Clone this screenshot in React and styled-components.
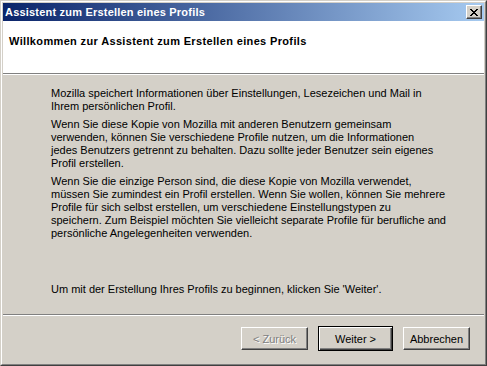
import React from "react";
import styled, { createGlobalStyle } from "styled-components";

const Global = createGlobalStyle`
  html, body { margin: 0; padding: 0; background: #d4d0c8; }
  body { width: 487px; height: 366px; overflow: hidden; font-family: "Liberation Sans", Arial, sans-serif; font-size: 11px; color: #000; }
`;

const Window = styled.div`
  box-sizing: border-box;
  width: 487px;
  height: 366px;
  background: #d4d0c8;
  border-top: 1px solid #d4d0c8;
  border-left: 1px solid #d4d0c8;
  border-right: 1px solid #404040;
  border-bottom: 1px solid #404040;
  display: flex;
`;

const Inner = styled.div`
  flex: 1;
  display: flex;
  flex-direction: column;
  border-top: 1px solid #ffffff;
  border-left: 1px solid #ffffff;
  border-right: 1px solid #808080;
  border-bottom: 1px solid #808080;
  padding: 1px;
`;

const TitleBar = styled.div`
  height: 18px;
  display: flex;
  align-items: center;
  justify-content: space-between;
  padding: 0 2px 0 2px;
  background: linear-gradient(to right, #0a246a, #a6caf0);
`;

const TitleText = styled.span`
  color: #fff;
  font-weight: bold;
  font-size: 11px;
  letter-spacing: 0.2px;
`;

const CloseBtn = styled.div`
  box-sizing: border-box;
  width: 16px;
  height: 14px;
  background: #d4d0c8;
  border-top: 1px solid #fff;
  border-left: 1px solid #fff;
  border-right: 1px solid #404040;
  border-bottom: 1px solid #404040;
  box-shadow: inset -1px -1px 0 #808080;
  display: flex;
  align-items: center;
  justify-content: center;
`;

const Header = styled.div`
  height: 53px;
  background: #fff;
  border-bottom: 1px solid #808080;
  box-shadow: 0 1px 0 #fff;
  padding: 14px 0 0 6px;
  box-sizing: border-box;
  font-weight: bold;
  letter-spacing: 0.35px;
`;

const Content = styled.div`
  flex: 1;
  padding: 13px 0 0 48px;
  display: flex;
  flex-direction: column;
`;

const Para = styled.p`
  margin: 0 0 ${p => (p.$last ? "18px" : "5px")} 0;
  line-height: 13px;
  white-space: nowrap;
`;

const Spacer = styled.div`
  flex: 1;
`;

const Footer = styled.div`
  border-top: 1px solid #808080;
  box-shadow: inset 0 1px 0 #fff;
  height: 49px;
  box-sizing: border-box;
  display: flex;
  justify-content: flex-end;
  align-items: flex-start;
  padding: 12px 14px 0 0;
  gap: 10px;
`;

const Button = styled.button`
  box-sizing: border-box;
  width: ${p => (p.$default ? "75px" : "67px")};
  height: ${p => (p.$default ? "25px" : "23px")};
  margin-top: ${p => (p.$default ? "-1px" : "0")};
  padding: 0;
  font-family: "Liberation Sans", Arial, sans-serif;
  font-size: 11px;
  background: #d4d0c8;
  color: ${p => (p.disabled ? "#808080" : "#000")};
  text-shadow: ${p => (p.disabled ? "1px 1px 0 #fff" : "none")};
  border-style: solid;
  border-width: 1px;
  border-color: ${p => (p.$default ? "#000" : "#fff #404040 #404040 #fff")};
  box-shadow: ${p =>
    p.$default
      ? "inset 1px 1px 0 #fff, inset -1px -1px 0 #404040, inset -2px -2px 0 #808080"
      : "inset -1px -1px 0 #808080"};
  display: flex;
  align-items: center;
  justify-content: center;
`;

const lines1 = [
  "Mozilla speichert Informationen über Einstellungen, Lesezeichen und Mail in",
  "Ihrem persönlichen Profil.",
];
const lines2 = [
  "Wenn Sie diese Kopie von Mozilla mit anderen Benutzern gemeinsam",
  "verwenden, können Sie verschiedene Profile nutzen, um die Informationen",
  "jedes Benutzers getrennt zu behalten. Dazu sollte jeder Benutzer sein eigenes",
  "Profil erstellen.",
];
const lines3 = [
  "Wenn Sie die einzige Person sind, die diese Kopie von Mozilla verwendet,",
  "müssen Sie zumindest ein Profil erstellen. Wenn Sie wollen, können Sie mehrere",
  "Profile für sich selbst erstellen, um verschiedene Einstellungstypen zu",
  "speichern. Zum Beispiel möchten Sie vielleicht separate Profile für berufliche and",
  "persönliche Angelegenheiten verwenden.",
];

const Lines = ({ lines }) => (
  <Para>
    {lines.map((l, i) => (
      <React.Fragment key={i}>
        {l}
        {i < lines.length - 1 && <br />}
      </React.Fragment>
    ))}
  </Para>
);

export default function App() {
  return (
    <>
      <Global />
      <Window>
        <Inner>
          <TitleBar>
            <TitleText>Assistent zum Erstellen eines Profils</TitleText>
            <CloseBtn>
              <svg width="8" height="7" viewBox="0 0 8 7">
                <path d="M0 0h2v1h1v1h2V1h1V0h2v1H7v1H6v1H5v1h1v1h1v1h1v1H6V6H5V5H3v1H2v1H0V6h1V5h1V4h1V3H2V2H1V1H0z" fill="#000" />
              </svg>
            </CloseBtn>
          </TitleBar>
          <Header>Willkommen zur Assistent zum Erstellen eines Profils</Header>
          <Content>
            <Lines lines={lines1} />
            <Lines lines={lines2} />
            <Lines lines={lines3} />
            <Spacer />
            <Para $last>Um mit der Erstellung Ihres Profils zu beginnen, klicken Sie 'Weiter'.</Para>
          </Content>
          <Footer>
            <Button disabled>&lt; Zurück</Button>
            <Button $default>Weiter &gt;</Button>
            <Button>Abbrechen</Button>
          </Footer>
        </Inner>
      </Window>
    </>
  );
}
